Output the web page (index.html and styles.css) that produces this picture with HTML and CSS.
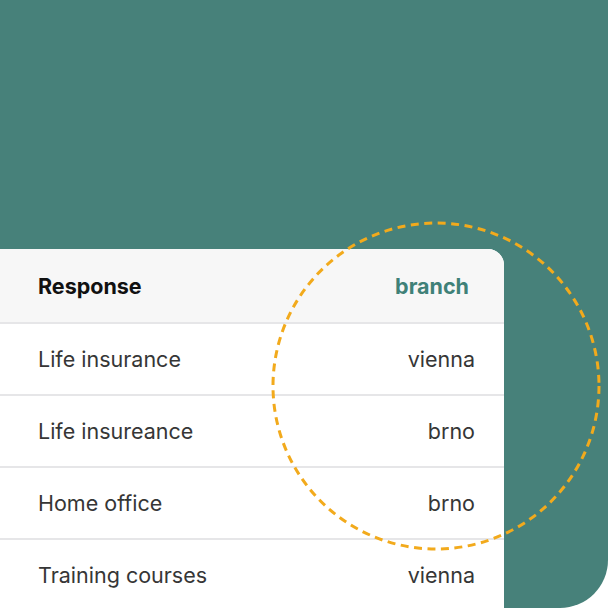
FILE: index.html
```html
<!DOCTYPE html>
<html>
<head>
<meta charset="utf-8">
<link rel="stylesheet" href="styles.css">
</head>
<body>
<div class="stage">
  <div class="card">
    <div class="row head">
      <span class="c1">Response</span>
      <span class="c2 accent">branch</span>
    </div>
    <div class="row"><span class="c1">Life insurance</span><span class="c2">vienna</span></div>
    <div class="row"><span class="c1">Life insureance</span><span class="c2">brno</span></div>
    <div class="row"><span class="c1">Home office</span><span class="c2">brno</span></div>
    <div class="row"><span class="c1">Training courses</span><span class="c2">vienna</span></div>
  </div>
  <svg class="ring" width="340" height="340" viewBox="0 0 340 340">
    <circle cx="170" cy="170" r="163" fill="none" stroke="#f2aa1c" stroke-width="3" stroke-dasharray="8 5.5"/>
  </svg>
</div>
</body>
</html>
```
FILE: styles.css
```css
html, body {
  margin: 0;
  padding: 0;
  background: #ffffff;
}
.stage {
  position: relative;
  width: 608px;
  height: 608px;
  background: #47817a;
  border-bottom-right-radius: 48px;
  overflow: hidden;
  padding-top: 249px;
  box-sizing: border-box;
  font-family: Inter, "Noto Sans", sans-serif;
}
.card {
  width: 504px;
  background: #ffffff;
  border-top-right-radius: 16px;
  overflow: hidden;
}
.row {
  display: flex;
  justify-content: space-between;
  align-items: center;
  height: 70px;
  padding: 0 29px 0 38px;
  border-top: 2px solid #e6e6e8;
  font-size: 21.5px;
  color: #363636;
  box-sizing: content-box;
}
.row.head {
  height: 73px;
  border-top: none;
  background: #f7f7f7;
  font-weight: 700;
  color: #111111;
  padding-right: 35px;
}
.accent {
  color: #3f8178;
}
.ring {
  position: absolute;
  left: 266px;
  top: 216px;
}
```
